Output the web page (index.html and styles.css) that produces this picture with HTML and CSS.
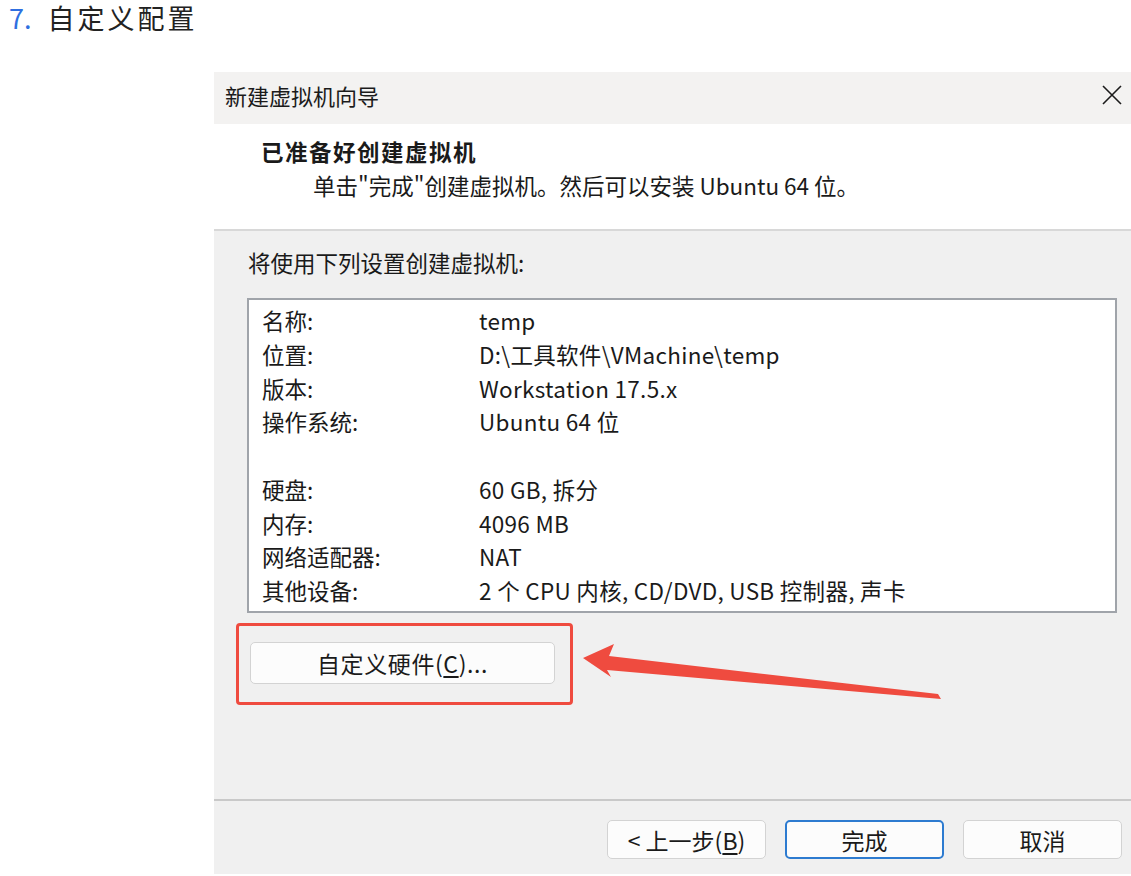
FILE: index.html
```html
<!DOCTYPE html>
<html lang="zh-CN">
<head>
<meta charset="utf-8">
<title>自定义配置</title>
<link rel="stylesheet" href="styles.css">
</head>
<body>
<div class="step"><span class="step-num">7.</span><span class="step-text">自定义配置</span></div>
<div class="dialog">
  <div class="titlebar">
    <span class="title">新建虚拟机向导</span>
    <svg class="close" width="20" height="20" viewBox="0 0 20 20"><path d="M1 1 L19 19 M19 1 L1 19" stroke="#1b1b1b" stroke-width="1.6" fill="none"/></svg>
  </div>
  <div class="header">
    <div class="h-title">已准备好创建虚拟机</div>
    <div class="h-sub">单击"完成"创建虚拟机。然后可以安装 Ubuntu 64 位。</div>
  </div>
  <div class="content">
    <div class="intro">将使用下列设置创建虚拟机:</div>
    <div class="listbox">
      <div class="row"><span class="lbl">名称:</span><span class="val">temp</span></div>
      <div class="row"><span class="lbl">位置:</span><span class="val">D:\工具软件\VMachine\temp</span></div>
      <div class="row"><span class="lbl">版本:</span><span class="val">Workstation 17.5.x</span></div>
      <div class="row"><span class="lbl">操作系统:</span><span class="val">Ubuntu 64 位</span></div>
      <div class="row"><span class="lbl">&nbsp;</span><span class="val"></span></div>
      <div class="row"><span class="lbl">硬盘:</span><span class="val">60 GB, 拆分</span></div>
      <div class="row"><span class="lbl">内存:</span><span class="val">4096 MB</span></div>
      <div class="row"><span class="lbl">网络适配器:</span><span class="val">NAT</span></div>
      <div class="row"><span class="lbl">其他设备:</span><span class="val">2 个 CPU 内核, CD/DVD, USB 控制器, 声卡</span></div>
    </div>
    <button class="btn custom">自定义硬件(<u>C</u>)...</button>
    <div class="highlight"></div>
    <svg class="arrow" width="370" height="62" viewBox="575 640 370 62"><polygon points="583,658 614,644 609,656 938,694 941,699 607,670 611,677" fill="#ef4b3f"/></svg>
  </div>
  <div class="footer">
    <button class="btn fbtn">&lt; 上一步(<u>B</u>)</button>
    <button class="btn fbtn primary">完成</button>
    <button class="btn fbtn">取消</button>
  </div>
</div>
</body>
</html>
```
FILE: styles.css
```css
html, body {
  margin: 0;
  padding: 0;
  background: #ffffff;
}
body {
  font-family: "Noto Sans CJK SC", "Noto Sans", sans-serif;
  color: #1a1a1a;
  width: 1131px;
  height: 876px;
  overflow: hidden;
}
.step {
  height: 36px;
  line-height: 36px;
  padding-left: 9px;
  font-size: 27px;
  color: #222;
  display: flex;
  gap: 16px;
}
.step-num {
  color: #2f6fe0;
}
.step-text {
  letter-spacing: 3px;
}
.dialog {
  margin-top: 36px;
  margin-left: 214px;
  width: 917px;
  font-size: 22.5px;
}
.titlebar {
  height: 52px;
  background: #f3f2f1;
  display: flex;
  align-items: center;
  justify-content: space-between;
  padding: 0 9px 6px 11px;
  box-sizing: border-box;
}
.title {
  font-size: 22px;
  color: #1b1b1b;
}
.header {
  background: #ffffff;
  height: 107px;
  box-sizing: border-box;
  border-bottom: 2px solid #d8d8d8;
  padding-top: 12px;
}
.h-title {
  padding-left: 47px;
  font-weight: bold;
  font-size: 22.5px;
  letter-spacing: 1.5px;
  line-height: 30px;
}
.h-sub {
  padding-left: 99px;
  margin-top: 3px;
  line-height: 33px;
}
.content {
  position: relative;
  background: #f0f0f0;
  height: 570px;
  box-sizing: border-box;
  padding-top: 16px;
  border-bottom: 2px solid #c9c9c9;
}
.intro {
  padding-left: 34px;
  line-height: 30px;
}
.listbox {
  margin: 21px 0 0 33px;
  width: 870px;
  height: 315px;
  box-sizing: border-box;
  background: #ffffff;
  border: 2px solid #a0a4aa;
  padding: 4px 0 0 13px;
}
.row {
  display: flex;
  line-height: 33.75px;
  height: 33.75px;
}
.lbl {
  width: 217px;
  flex: none;
}
.val {
  letter-spacing: 0.3px;
}
.btn {
  font-family: inherit;
  font-size: 23px;
  color: #1a1a1a;
  background: #fcfcfc;
  border: 1px solid #d3d3d3;
  border-radius: 5px;
  padding: 0;
}
.btn u {
  text-underline-offset: 3px;
}
.custom {
  display: block;
  margin: 29px 0 0 36px;
  width: 305px;
  height: 42px;
  letter-spacing: 0.6px;
}
.highlight {
  position: absolute;
  left: 22px;
  top: 392px;
  width: 337px;
  height: 82px;
  box-sizing: border-box;
  border: 3px solid #ef4b3f;
  border-radius: 4px;
}
.arrow {
  position: absolute;
  left: 361px;
  top: 409px;
}
.footer {
  background: #f0f0f0;
  height: 73px;
  display: flex;
  justify-content: flex-end;
  gap: 19px;
  padding: 19px 9px 0 0;
  box-sizing: border-box;
}
.fbtn {
  width: 159px;
  height: 39px;
}
.primary {
  border: 2px solid #2d7bd0;
}
```
